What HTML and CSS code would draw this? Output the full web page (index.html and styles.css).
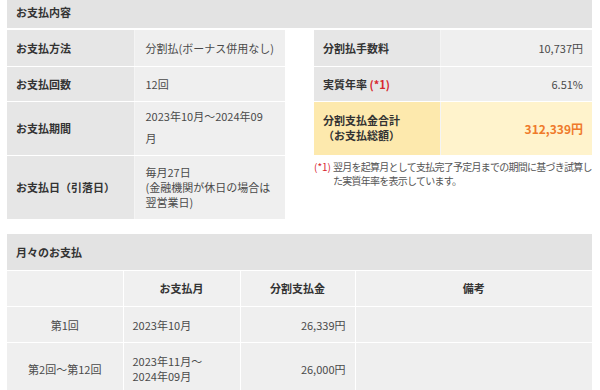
FILE: index.html
```html
<!DOCTYPE html>
<html lang="ja">
<head>
<meta charset="utf-8">
<link rel="stylesheet" href="styles.css">
</head>
<body>
<div class="page">
  <section class="box">
    <h2 class="box-head top-head">お支払内容</h2>
    <div class="summary">
      <table class="info info-left">
        <tr class="r1"><th>お支払方法</th><td>分割払(ボーナス併用なし)</td></tr>
        <tr class="r2"><th>お支払回数</th><td>12回</td></tr>
        <tr class="r3"><th>お支払期間</th><td><span class="l1">2023年10月～2024年09</span><br>月</td></tr>
        <tr class="r4"><th>お支払日（引落日）</th><td class="tight">毎月27日<br>(金融機関が休日の場合は<br>翌営業日)</td></tr>
      </table>
      <div class="right-col">
        <table class="info info-right">
          <tr class="r1"><th>分割払手数料</th><td class="num">10,737円</td></tr>
          <tr class="r2"><th>実質年率 <span class="mark">(*1)</span></th><td class="num">6.51%</td></tr>
          <tr class="r3 total"><th class="tight">分割支払金合計<br>（お支払総額）</th><td class="num total-val">312,339円</td></tr>
        </table>
        <p class="note"><span class="mark">(*1)</span><span class="note-text">翌月を起算月として支払完了予定月までの期間に基づき試算した実質年率を表示しています。</span></p>
      </div>
    </div>
  </section>

  <section class="box box-monthly">
    <h2 class="box-head">月々のお支払</h2>
    <table class="monthly">
      <tr class="mh">
        <th class="c1"></th><th class="c2">お支払月</th><th class="c3">分割支払金</th><th class="c4">備考</th>
      </tr>
      <tr class="m1">
        <td class="center">第1回</td><td>2023年10月</td><td class="num">26,339円</td><td></td>
      </tr>
      <tr class="m2">
        <td class="center">第2回～第12回</td><td class="tight">2023年11月～<br>2024年09月</td><td class="num">26,000円</td><td></td>
      </tr>
    </table>
  </section>
</div>
</body>
</html>
```

FILE: styles.css
```css
* { box-sizing: border-box; }
html, body { margin: 0; padding: 0; background: #fff; }
body {
  font-family: "Noto Sans CJK JP", "Noto Sans", sans-serif;
  font-size: 11px;
  color: #4a4a4a;
}
.page { padding: 0 8px 0 7px; }

.box-head {
  margin: 0;
  background: #e3e3e3;
  font-size: 11px;
  font-weight: bold;
  color: #333;
  padding: 0 9px;
}
.top-head { height: 28px; line-height: 24px; }

.summary {
  display: flex;
  gap: 29px;
  margin-top: 2px;
}

.info {
  border-collapse: collapse;
  table-layout: fixed;
  width: 278px;
  flex: none;
}
.right-col { flex: none; width: 278px; }
.info th, .info td {
  padding: 0;
  border-bottom: 1px solid #fff;
  vertical-align: middle;
  text-align: left;
}
.info th {
  background: #e6e6e6;
  color: #333;
  font-weight: bold;
  padding-left: 9px;
  border-right: 1px solid #f4f4f4;
}
.info td {
  background: #efefef;
  padding-left: 11px;
  padding-right: 4px;
}
.info .num { padding-right: 9px; }
.info-left th { width: 127px; }
.info-right th { width: 126px; }

.info .r1 th, .info .r1 td { height: 36px; }
.info .r2 th, .info .r2 td { height: 35px; }
.info .r3 th, .info .r3 td { height: 54px; }
.info .r4 th, .info .r4 td { height: 64px; }
.info-left .r3 td { line-height: 22px; padding-bottom: 2px; }
.tight { line-height: 15px; }

.num { text-align: right !important; }

.mark { color: #d8262e; font-weight: bold; }

.total th { background: #fde9ad; }
.total td { background: #fff3cc; }
.total-val {
  color: #ef7a2a;
  font-weight: bold;
  font-size: 12px;
  padding-top: 2px;
}

.note {
  margin: 4px 0 0;
  font-size: 10px;
  line-height: 14px;
  display: flex;
  color: #555;
}
.note .mark { font-weight: normal; flex: none; margin-right: 2px; }
.note-text { letter-spacing: -0.75px; }

.box-monthly { margin-top: 14px; }
.box-monthly .box-head { height: 36px; line-height: 36px; }

.monthly {
  width: 100%;
  border-collapse: collapse;
  table-layout: fixed;
  margin-top: 1px;
}
.monthly th, .monthly td {
  background: #efefef;
  border: 1px solid #fff;
  border-top: none;
  padding: 0 9px;
  vertical-align: middle;
}
.monthly tr > :first-child { border-left: none; }
.monthly tr > :last-child { border-right: none; }
.monthly th {
  font-weight: bold;
  color: #333;
  text-align: center;
  height: 36px;
  background: #f0f0f0;
}
.monthly .c1 { width: 116px; }
.monthly .c2 { width: 117px; }
.monthly .c3 { width: 115px; }
.monthly .m1 td { height: 36px; }
.monthly .m2 td { height: 52px; }
.center { text-align: center; }
```
